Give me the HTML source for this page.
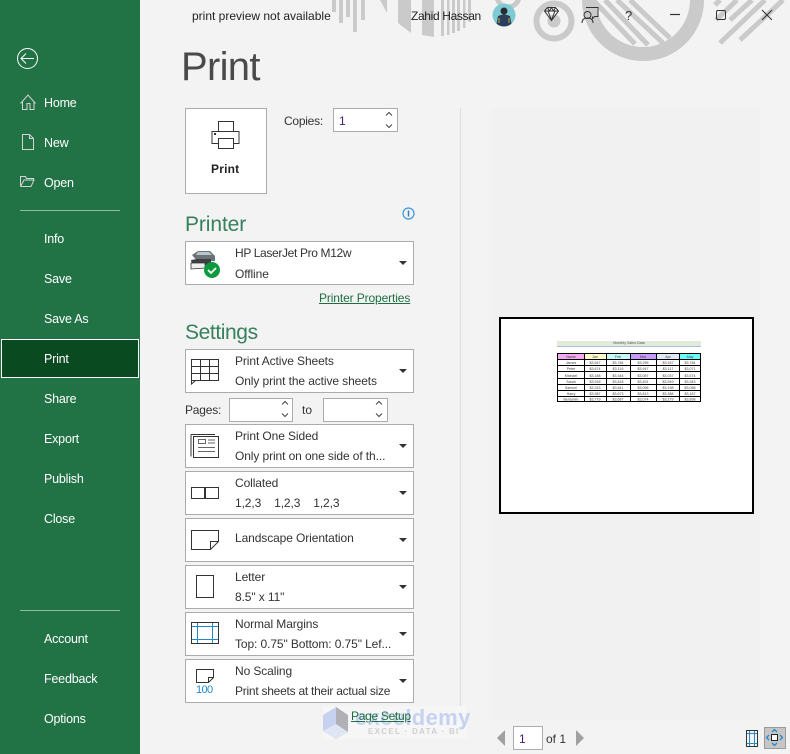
<!DOCTYPE html>
<html><head><meta charset="utf-8"><style>
html,body{margin:0;padding:0;width:790px;height:754px;overflow:hidden;background:#f3f3f3}
body{position:relative;font-family:"Liberation Sans",sans-serif;font-size:12px;color:#333}
.t{position:absolute;white-space:nowrap;line-height:16px}
.n{position:absolute;left:44px;color:#fff;font-size:12.5px;letter-spacing:-.2px;line-height:16px;white-space:nowrap}
.b{position:absolute;left:185px;width:227px;height:42px;background:#fff;border:1px solid #ababab}
.b svg.i{position:absolute;left:-1px;top:0}
.b .a{position:absolute;left:49px;top:3px;line-height:16px;white-space:nowrap;font-size:12px;letter-spacing:-.1px;color:#333}
.b .c{position:absolute;left:49px;top:23px;line-height:16px;white-space:nowrap;font-size:12px;letter-spacing:-.1px;color:#333}
.b:after{content:"";position:absolute;left:213px;top:19px;border-left:4px solid transparent;border-right:4px solid transparent;border-top:4px solid #333}
.s{position:absolute;background:#fff;border:1px solid #ababab}
svg{position:absolute;overflow:visible}
.m{font-family:"Liberation Sans",sans-serif;font-size:3.6px;fill:#444;text-anchor:middle}
</style></head><body>
<div style="position:absolute;left:0;top:0;width:140px;height:754px;background:#217346"></div>
<svg style="left:0;top:0" width="140" height="754" fill="none" stroke="#fff">
<circle cx="27.500" cy="58.500" r="10" stroke-width="1"/><path d="M21 58.500H34M26 53.500l-5 5 5 5" stroke-width="1"/>
<g stroke="#d4d4d4"><path d="M20.500 103.500L28 95l7.500 8.500M22.500 101.500v8h4.500v-6h3v6h4v-8"/>
<path d="M22.500 134.500h7l4 4v11h-11zM29.500 134.500v4h4"/>
<path d="M20.500 186.500v-10h5l1 2h7v2M20.500 186.500h10.500l3-6.500h-10l-3.500 6.500"/></g>
<path d="M20 210.500H120M20 610.500H120" stroke="#8dbb9f"/>
</svg>
<div class="n" style="top:95px">Home</div>
<div class="n" style="top:135px">New</div>
<div class="n" style="top:175px">Open</div>
<div class="n" style="top:231px">Info</div>
<div class="n" style="top:271px">Save</div>
<div class="n" style="top:311px">Save As</div>
<div style="position:absolute;left:1px;top:339px;width:136px;height:37px;background:#0a4a20;border:1px solid #fff"></div>
<div class="n" style="top:351px">Print</div>
<div class="n" style="top:391px">Share</div>
<div class="n" style="top:431px">Export</div>
<div class="n" style="top:471px">Publish</div>
<div class="n" style="top:511px">Close</div>
<div class="n" style="top:631px">Account</div>
<div class="n" style="top:671px">Feedback</div>
<div class="n" style="top:711px">Options</div>

<svg style="left:0;top:0" width="790" height="70" fill="none" stroke="#cacaca">
<g fill="#cacaca" stroke="none">
<rect x="332" y="0" width="4" height="12"/><rect x="339" y="0" width="4" height="23"/><rect x="346" y="0" width="4" height="17"/><rect x="353" y="0" width="4" height="32"/><rect x="361" y="0" width="4" height="20"/>
<path d="M380 0l7 13V0zM398 0v23l13 10V0zM422 0v35l12 2V0z"/>
<rect x="441" y="0" width="3" height="36"/><rect x="447" y="0" width="2.500" height="35"/><rect x="452" y="0" width="3" height="33"/><rect x="457" y="0" width="3" height="31"/><rect x="463" y="0" width="2.500" height="28"/><rect x="468" y="0" width="3" height="22"/>
</g>
<circle cx="554" cy="21" r="17.500" stroke-width="6"/><circle cx="554" cy="21" r="6.500" fill="#cacaca" stroke="none"/>
<circle cx="508" cy="-4" r="11" stroke-width="5"/>
<circle cx="643" cy="0" r="54" stroke-width="14"/>
<g stroke-width="5"><path d="M593 0l42 44M605 0l43 45M617 0l46 43M630 0l40 38"/><path d="M715 5l5-5M716 20l21-20M730 20l22-20M720 43l45-43M740 40l43-40"/></g>
</svg>
<div class="t" style="left:192px;top:8px;color:#222">print preview not available</div>
<div class="t" style="left:411px;top:8px;color:#222;letter-spacing:-.35px">Zahid Hassan</div>
<svg style="left:492px;top:3px" width="26" height="26"><defs><clipPath id="av"><circle cx="12" cy="12" r="11.500"/></clipPath></defs><g clip-path="url(#av)"><rect width="24" height="24" fill="#7ecbd3"/><circle cx="12" cy="8" r="3.500" fill="#2b2b33"/><path d="M4 24l2-11 6-2 6 2 2 11z" fill="#2c3f5a"/><path d="M7 15v5M17 15v5" stroke="#c9a84a"/></g></svg>
<svg style="left:0;top:0" width="790" height="40" fill="none" stroke="#333">
<path d="M544.500 11l3-3.500h8l3 3.500-7 9.500zM544.500 11h14M548 11l3.500 9 3.500-9M547.500 7.500l2 3.500 2-3.500 2 3.500 2-3.500"/>
<path d="M586 7.500h12v9h-3.500l-2 2v-2"/><circle cx="587.500" cy="15" r="3.500"/><path d="M582 23c0-4 2.500-5 5.500-5s5.500 1 5.500 5"/>
<path d="M670 14.500h10" stroke-width="1.200"/><rect x="716.500" y="10.500" width="9" height="9" rx="1.500"/>
<path d="M762 10l10 10M772 10l-10 10"/></svg>
<div class="t" style="left:625px;top:8px;color:#333;font-size:13px">?</div>

<div class="t" style="left:181px;top:43px;font-size:40px;line-height:48px;color:#4a4a4a;letter-spacing:-.7px;font-weight:400">Print</div>

<div class="s" style="left:185px;top:108px;width:80px;height:84px"></div>
<svg style="left:0;top:0" width="300" height="160" fill="none" stroke="#333"><path d="M218.500 131.500v-10h15v10M218.500 143.500h-6.500v-12h27v12h-6M218.500 138.500h15v10h-15z"/><rect x="214" y="133" width="2" height="2" fill="#333" stroke="none"/></svg>
<div class="t" style="left:211px;top:161px;font-weight:700;font-size:12px;color:#222;letter-spacing:.2px">Print</div>

<div class="t" style="left:284px;top:113px;color:#333;letter-spacing:-.25px">Copies:</div>
<div class="s" style="left:333px;top:108px;width:63px;height:22px"></div>
<div class="t" style="left:339px;top:113px;color:#4a1a70">1</div>
<svg style="left:0;top:0" width="400" height="140" fill="none" stroke="#444"><path d="M386 115.500l3-3 3 3M386 124.500l3 3 3-3"/></svg>

<div style="position:absolute;left:460px;top:108px;width:1px;height:612px;background:#dcdcdc"></div>
<div style="position:absolute;left:492px;top:108px;width:268px;height:613px;background:#f1f1f1"></div>

<div class="t" style="left:185px;top:211px;font-size:21px;line-height:28px;color:#36815b;letter-spacing:-.1px">Printer</div>
<svg style="left:402px;top:207px" width="14" height="14" fill="none"><circle cx="6.500" cy="6.500" r="5.500" stroke="#3a96dd" stroke-width="1.200"/><path d="M6.500 3.500v6" stroke="#2a7fc0" stroke-width="1.500"/></svg>

<div class="b" style="top:241px"><div class="a" style="letter-spacing:-.35px">HP LaserJet Pro M12w</div><div class="c" style="top:24px">Offline</div>
<svg class="i" width="44" height="42"><path d="M7 13l6-4h12l5 5v5H12z" fill="#6d7276"/><path d="M13 10h11l3 3H11z" fill="#b7c7d0"/><path d="M6 18l6-1h14v6H7z" fill="#3c3f42"/><path d="M6 21h14v5l-14 1z" fill="#efefef" stroke="#333" stroke-width=".8"/><circle cx="27" cy="28" r="8" fill="#0d9a3e"/><path d="M23 28l3 3 5-5" stroke="#fff" stroke-width="1.800" fill="none"/></svg></div>
<div class="t" style="left:319px;top:290px;color:#1f6e43;text-decoration:underline;letter-spacing:-.12px">Printer Properties</div>

<div class="t" style="left:185px;top:319px;font-size:21px;line-height:28px;color:#36815b;letter-spacing:-.4px">Settings</div>

<div class="b" style="top:349px"><div class="a">Print Active Sheets</div><div class="c">Only print the active sheets</div>
<svg class="i" width="44" height="42" fill="none" stroke="#333"><path d="M6.500 9.500h27v21h-23l-4 3.500v-3.500zM6.500 16.500h27M6.500 23.500h27M15.500 9.500v21M24.500 9.500v21M6.500 30.500h4"/></svg></div>
<div class="t" style="left:185px;top:402px;color:#333;letter-spacing:-.2px">Pages:</div>
<div class="s" style="left:229px;top:398px;width:62px;height:22px"></div>
<div class="t" style="left:302px;top:402px;color:#333">to</div>
<div class="s" style="left:323px;top:398px;width:63px;height:22px"></div>
<svg style="left:0;top:0" width="400" height="430" fill="none" stroke="#444"><path d="M282 404.500l3-3 3 3M282 413.500l3 3 3-3M376 404.500l3-3 3 3M376 413.500l3 3 3-3"/></svg>

<div class="b" style="top:424px"><div class="a">Print One Sided</div><div class="c">Only print on one side of th...</div>
<svg class="i" width="44" height="42" fill="none" stroke="#333"><path d="M8.500 11.500h25v21h-25zM6 9.500v22M6 9.500h24"/><path d="M13.500 14.500h7v4h-7zM23 15h7M23 18h7M13 22.500h17M13 26.500h17" stroke="#666"/></svg></div>

<div class="b" style="top:471px"><div class="a">Collated</div><div class="c">1,2,3 &nbsp; &nbsp;1,2,3 &nbsp; &nbsp;1,2,3</div>
<svg class="i" width="44" height="42" fill="none" stroke="#333"><path d="M6.500 15.500h27v11h-27zM19.500 15v12M20.500 15v12"/></svg></div>

<div class="b" style="top:518px"><div class="a" style="top:11px">Landscape Orientation</div>
<svg class="i" width="44" height="42" fill="none" stroke="#333"><path d="M6.500 11.500h27v11l-8 8h-19zM33.500 22.500h-8v8"/></svg></div>

<div class="b" style="top:565px"><div class="a">Letter</div><div class="c">8.5" x 11"</div>
<svg class="i" width="44" height="42" fill="none" stroke="#333"><path d="M11.500 9.500h17v22h-17z"/></svg></div>

<div class="b" style="top:612px"><div class="a">Normal Margins</div><div class="c">Top: 0.75" Bottom: 0.75" Lef...</div>
<svg class="i" width="44" height="42"><path d="M12.500 9v22M27.500 9v22M6 13.500h28M6 26.500h28" stroke="#1f8ad0" fill="none"/><path d="M6.500 9.500h27v21h-27z" fill="none" stroke="#333"/></svg></div>

<div class="b" style="top:659px"><div class="a">No Scaling</div><div class="c" style="letter-spacing:-.25px">Print sheets at their actual size</div>
<svg class="i" width="44" height="42" fill="none" stroke="#333"><path d="M11.500 9.500h17v8l-5 5h-12zM28.500 17.500h-5v5"/><text x="11" y="33" font-family="Liberation Sans" font-size="11" letter-spacing="-.6" fill="#1f8ad0" stroke="none">100</text></svg></div>

<div style="position:absolute;left:323px;top:706px;width:144px;height:33px;background:#f6f6f6"></div>
<svg style="left:323px;top:707px" width="28" height="32"><path d="M0 8L13 0l12 8v17L13 32 0 24z" fill="#c6d2f0"/><path d="M13 0l12 8v17l-12-7z" fill="#b0b0b6"/><path d="M0 24l13-7 12 8-12 7z" fill="#dfe5f2"/></svg>
<div class="t" style="left:355px;top:706px;font-size:22px;line-height:24px;font-weight:700;color:#c6d2f0;letter-spacing:.35px">exceldemy</div>
<div class="t" style="left:368px;top:726px;font-size:8px;line-height:12px;font-weight:700;color:#cfcfcf;letter-spacing:1.300px">EXCEL · DATA · BI</div>
<div class="t" style="left:351px;top:708px;color:#1f6e43;text-decoration:underline;letter-spacing:-.3px">Page Setup</div>

<div style="position:absolute;left:499px;top:317px;width:251px;height:193px;background:#fff;border:2px solid #000">
<div style="position:absolute;left:56px;top:22px;width:144px;height:5px;background:#e2ebd9;border-bottom:1px solid #a9c0e0;font-size:3.6px;line-height:5px;text-align:center;color:#555">Monthly Sales Data</div>
<svg style="left:56px;top:34px" width="145" height="50" shape-rendering="crispEdges">
<rect width="144" height="49" fill="#000"/>
<rect x="1" y="1" width="26" height="5" fill="#f6a9f0"/><rect x="28" y="1" width="21" height="5" fill="#fffcc8"/><rect x="50" y="1" width="23" height="5" fill="#c4fbfb"/><rect x="74" y="1" width="25" height="5" fill="#c69cfa"/><rect x="100" y="1" width="22" height="5" fill="#dfeaf6"/><rect x="123" y="1" width="20" height="5" fill="#66ffff"/>
<g fill="#fff">
<rect x="1" y="7" width="26" height="5"/><rect x="28" y="7" width="21" height="5"/><rect x="50" y="7" width="23" height="5"/><rect x="74" y="7" width="25" height="5"/><rect x="100" y="7" width="22" height="5"/><rect x="123" y="7" width="20" height="5"/>
<rect x="1" y="13" width="26" height="5"/><rect x="28" y="13" width="21" height="5"/><rect x="50" y="13" width="23" height="5"/><rect x="74" y="13" width="25" height="5"/><rect x="100" y="13" width="22" height="5"/><rect x="123" y="13" width="20" height="5"/>
<rect x="1" y="19" width="26" height="6"/><rect x="28" y="19" width="21" height="6"/><rect x="50" y="19" width="23" height="6"/><rect x="74" y="19" width="25" height="6"/><rect x="100" y="19" width="22" height="6"/><rect x="123" y="19" width="20" height="6"/>
<rect x="1" y="26" width="26" height="5"/><rect x="28" y="26" width="21" height="5"/><rect x="50" y="26" width="23" height="5"/><rect x="74" y="26" width="25" height="5"/><rect x="100" y="26" width="22" height="5"/><rect x="123" y="26" width="20" height="5"/>
<rect x="1" y="32" width="26" height="5"/><rect x="28" y="32" width="21" height="5"/><rect x="50" y="32" width="23" height="5"/><rect x="74" y="32" width="25" height="5"/><rect x="100" y="32" width="22" height="5"/><rect x="123" y="32" width="20" height="5"/>
<rect x="1" y="38" width="26" height="5"/><rect x="28" y="38" width="21" height="5"/><rect x="50" y="38" width="23" height="5"/><rect x="74" y="38" width="25" height="5"/><rect x="100" y="38" width="22" height="5"/><rect x="123" y="38" width="20" height="5"/>
<rect x="1" y="44" width="26" height="4"/><rect x="28" y="44" width="21" height="4"/><rect x="50" y="44" width="23" height="4"/><rect x="74" y="44" width="25" height="4"/><rect x="100" y="44" width="22" height="4"/><rect x="123" y="44" width="20" height="4"/>
</g>
<g class="m" style="font-size:3.600px">
<text class="m" x="14" y="5">Name</text><text class="m" x="38" y="5">Jan</text><text class="m" x="61" y="5">Feb</text><text class="m" x="86" y="5">Mar</text><text class="m" x="111" y="5">Apr</text><text class="m" x="133" y="5">May</text>
<text class="m" x="14" y="11">James</text><text class="m" x="38" y="11">$3,947</text><text class="m" x="61" y="11">$3,784</text><text class="m" x="86" y="11">$3,295</text><text class="m" x="111" y="11">$3,937</text><text class="m" x="133" y="11">$3,784</text>
<text class="m" x="14" y="17">Peter</text><text class="m" x="38" y="17">$3,674</text><text class="m" x="61" y="17">$3,119</text><text class="m" x="86" y="17">$3,947</text><text class="m" x="111" y="17">$3,117</text><text class="m" x="133" y="17">$3,071</text>
<text class="m" x="14" y="24">Michael</text><text class="m" x="38" y="24">$3,188</text><text class="m" x="61" y="24">$3,344</text><text class="m" x="86" y="24">$3,087</text><text class="m" x="111" y="24">$3,037</text><text class="m" x="133" y="24">$3,574</text>
<text class="m" x="14" y="30">Sarah</text><text class="m" x="38" y="30">$3,918</text><text class="m" x="61" y="30">$3,818</text><text class="m" x="86" y="30">$3,491</text><text class="m" x="111" y="30">$3,949</text><text class="m" x="133" y="30">$3,943</text>
<text class="m" x="14" y="36">Samuel</text><text class="m" x="38" y="36">$3,243</text><text class="m" x="61" y="36">$3,811</text><text class="m" x="86" y="36">$3,096</text><text class="m" x="111" y="36">$3,198</text><text class="m" x="133" y="36">$3,058</text>
<text class="m" x="14" y="42">Harry</text><text class="m" x="38" y="42">$3,987</text><text class="m" x="61" y="42">$3,673</text><text class="m" x="86" y="42">$3,813</text><text class="m" x="111" y="42">$3,388</text><text class="m" x="133" y="42">$3,187</text>
<text class="m" x="14" y="47.500">Benjamin</text><text class="m" x="38" y="47.500">$3,779</text><text class="m" x="61" y="47.500">$3,687</text><text class="m" x="86" y="47.500">$3,074</text><text class="m" x="111" y="47.500">$3,179</text><text class="m" x="133" y="47.500">$3,898</text>
</g>
</svg>
</div>

<svg style="left:0;top:0" width="790" height="754" fill="none">
<path d="M505 730v16l-8-8zM576 730v16l8-8z" fill="#a0a0a0"/>
<path d="M749.500 730v17M754.500 730v17" stroke="#1f8ad0"/><path d="M746 733.500h12M746 743.500h12" stroke="#1f8ad0"/><path d="M746.500 730.500h11v16h-11z" stroke="#333"/>
<rect x="764.500" y="727.500" width="21" height="21" fill="#c6c6c6" stroke="#9a9a9a"/>
<rect x="771.500" y="734.500" width="6" height="6" fill="#fff" stroke="#222"/>
<path d="M772 732l2.500-2.500L777 732M772 743l2.500 2.500L777 743M769 735l-2.500 2.500L769 740M780 735l2.500 2.500L780 740" stroke="#1f8ad0" stroke-width="1.300"/>
</svg>
<div class="s" style="left:513px;top:726px;width:28px;height:22px"></div>
<div class="t" style="left:519px;top:731px;color:#4a1a70">1</div>
<div class="t" style="left:546px;top:731px;color:#333">of 1</div>
</body></html>
